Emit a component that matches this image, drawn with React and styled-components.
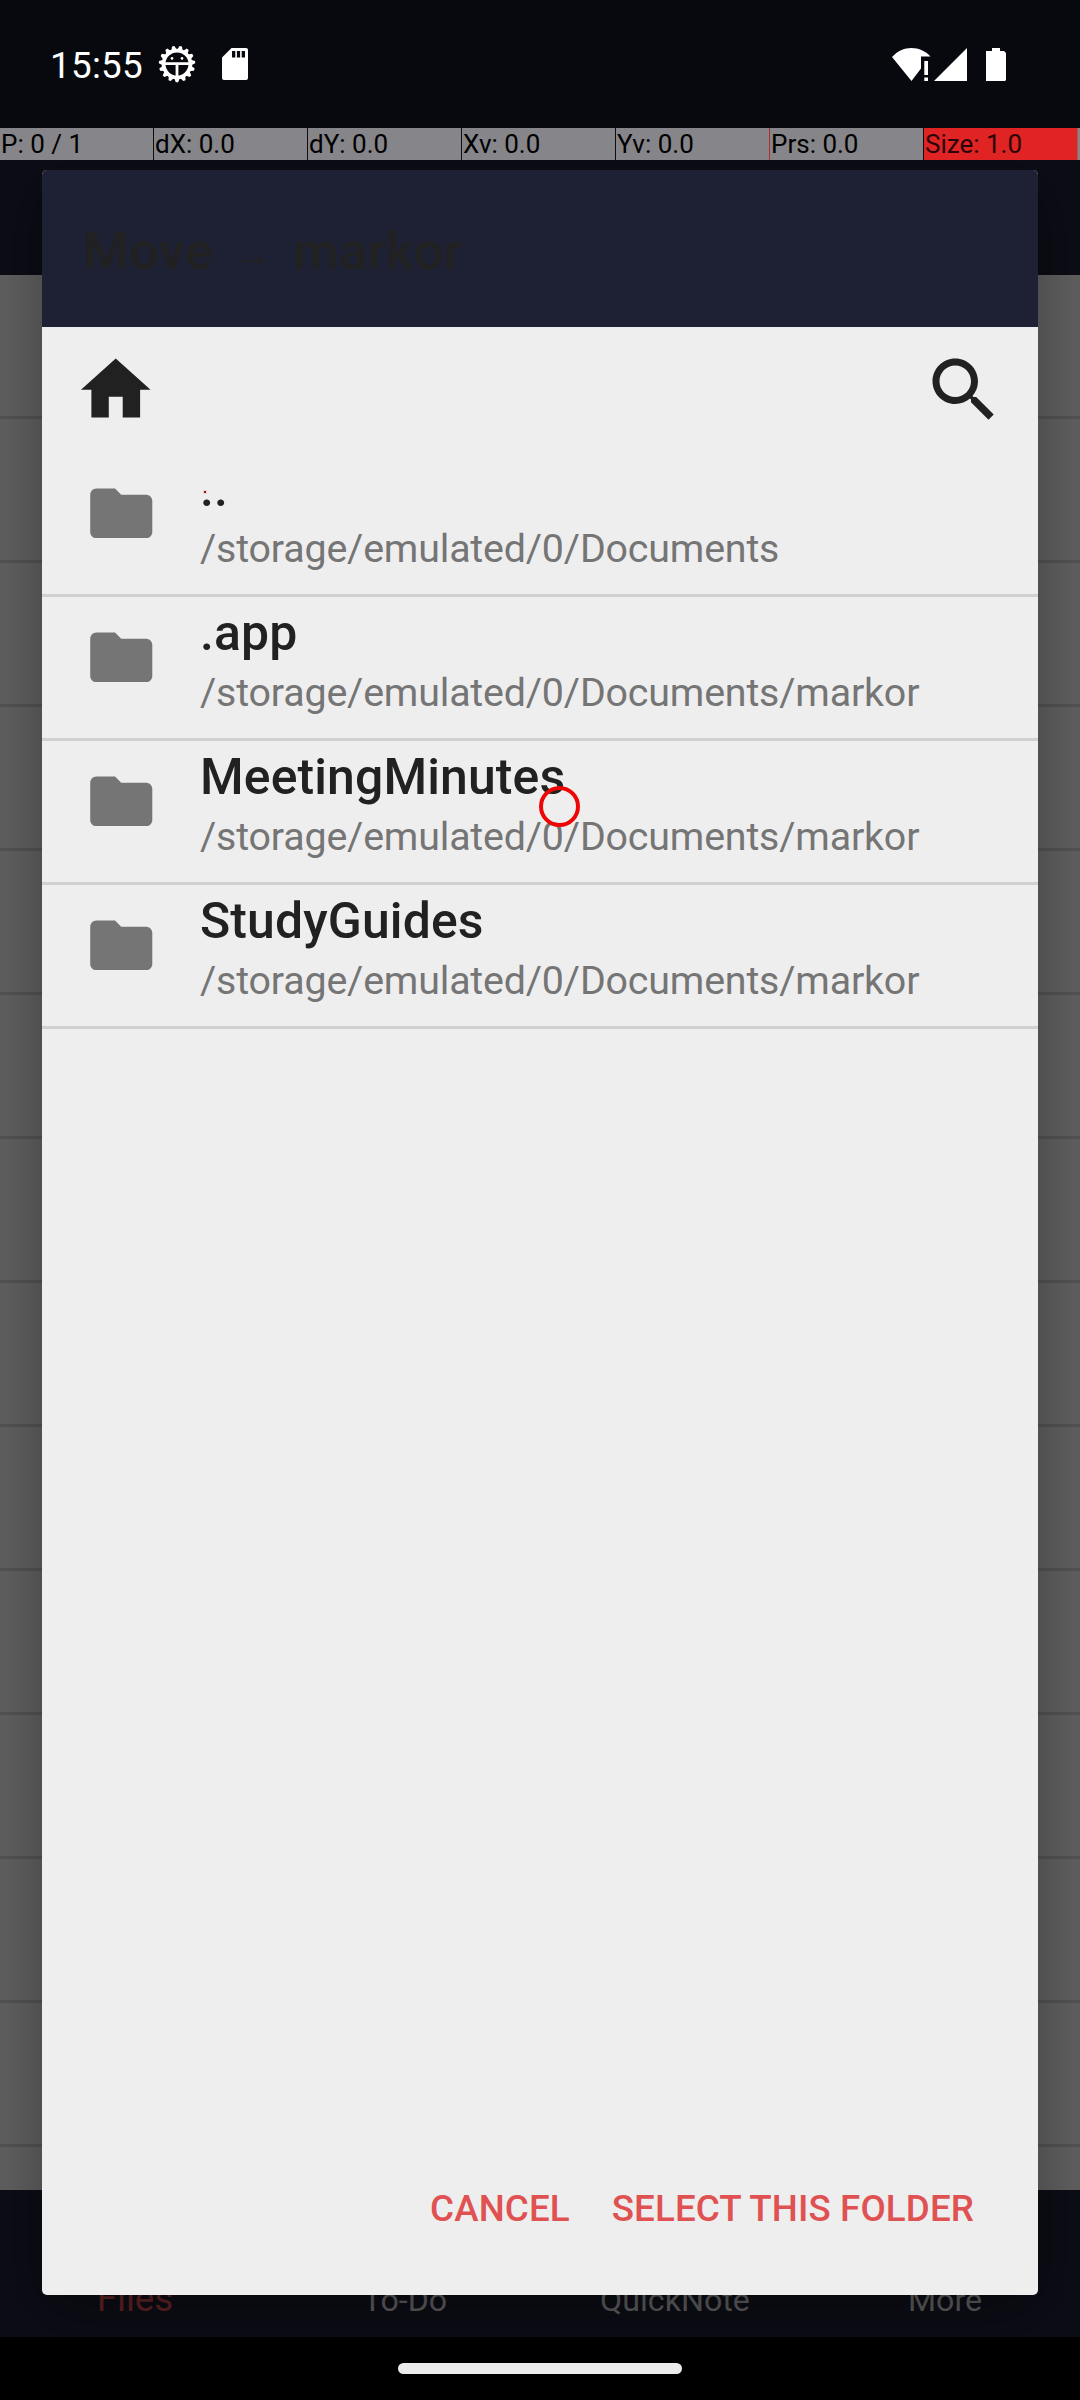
import React from "react";
import styled, { createGlobalStyle } from "styled-components";

const GlobalStyle = createGlobalStyle`
  * { box-sizing: border-box; }
  html, body { margin: 0; padding: 0; background: #000; }
  body { font-family: Roboto, "Liberation Sans", sans-serif; }
`;

const Screen = styled.div`
  position: relative;
  display: flex;
  flex-direction: column;
  width: 1080px;
  height: 2400px;
  overflow: hidden;
  background: #5f5f5f;
`;

const StatusBar = styled.header`
  flex: none;
  display: flex;
  align-items: center;
  justify-content: space-between;
  height: 128px;
  padding: 0 74px 0 50px;
  background: #08090e;
  color: #fff;
`;

const StatusGroup = styled.div`
  display: flex;
  align-items: center;
  height: 44px;
`;

const Clock = styled.span`
  width: 108px;
  font-size: 36.75px;
  line-height: 44px;
  letter-spacing: 0.3px;
  padding-top: 4px;
`;

const Glyph = styled.svg`
  display: block;
  flex: none;
  width: ${(p) => p.$w}px;
  height: ${(p) => p.$h}px;
  margin-left: ${(p) => p.$ml || 0}px;
  fill: ${(p) => p.$color || "#fff"};
  overflow: visible;
`;

const PointerBar = styled.div`
  flex: none;
  display: grid;
  grid-template-columns: repeat(7, 153px) 1fr;
  column-gap: 1px;
  height: 32px;
  background: linear-gradient(90deg, #0d0e14 0 769px, #b02a2e 769px 770px, #0d0e14 770px 1077px, #b0555a 1077px);
`;

const PointerCell = styled.div`
  padding-left: 1px;
  background: ${(p) => (p.$hot ? "#e02424" : "#868589")};
  color: ${(p) => (p.$hot ? "#2a0508" : "#000")};
  font-size: 26px;
  line-height: 33px;
  white-space: nowrap;
`;

const AppBar = styled.div`
  flex: none;
  height: 115px;
  background: #0c0d15;
`;

const BackgroundList = styled.div`
  flex: none;
  height: 1915px;
  overflow: hidden;
`;

const BackgroundRow = styled.div`
  height: 144px;
  border-bottom: 3px solid #525252;
`;

const BottomNav = styled.nav`
  flex: none;
  display: grid;
  grid-template-columns: repeat(4, 1fr);
  align-items: end;
  height: 147px;
  padding-bottom: 17px;
  background: #0c0d15;
`;

const NavItem = styled.span`
  padding-bottom: ${(p) => (p.$active ? 1 : 0)}px;
  text-align: center;
  font-size: ${(p) => (p.$active ? 36.75 : 32.2)}px;
  line-height: 40px;
  color: ${(p) => (p.$active ? "#5e2021" : "#5a5a5a")};
`;

const GestureBar = styled.div`
  flex: none;
  display: flex;
  justify-content: center;
  height: 63px;
  padding-top: 26px;
  background: #000;
`;

const GestureHandle = styled.div`
  width: 284px;
  height: 11px;
  border-radius: 6px;
  background: #ececec;
`;

const DialogLayer = styled.div`
  position: absolute;
  left: 0;
  right: 0;
  top: 160px;
  height: 2177px;
  padding: 10px 42px 42px;
  overflow: hidden;
`;

const Dialog = styled.section`
  display: flex;
  flex-direction: column;
  height: 2125px;
  border-radius: 5px;
  overflow: hidden;
  background: #eee;
  box-shadow: 0 16px 60px rgba(0, 0, 0, 0.32);
`;

const DialogHeader = styled.h1`
  flex: none;
  display: flex;
  align-items: center;
  height: 157px;
  margin: 0;
  padding: 4px 0 0 41px;
  background: #1e2033;
  color: #212121;
  font-size: 52.5px;
  font-weight: 500;
  line-height: 62px;
  letter-spacing: 0.2px;
`;

const TitleArrow = styled.span`
  display: flex;
  width: 80px;
  justify-content: center;
  padding-top: 6px;
  font-size: 40px;
  font-weight: 400;
  font-family: "Liberation Sans", sans-serif;
`;

const Tools = styled.div`
  flex: none;
  display: flex;
  justify-content: space-between;
  height: 126px;
  padding: 21px 32px 0 32px;
`;

const FolderRow = styled.div`
  flex: none;
  display: flex;
  height: 144px;
  border-bottom: 3px solid #d0d0d0;
`;

const FolderIconBox = styled.div`
  width: 158px;
  padding: 23px 0 0 42px;
`;

const FolderText = styled.div`
  display: flex;
  flex-direction: column;
  white-space: nowrap;
`;

const FolderName = styled.span`
  height: 68px;
  padding-top: 6px;
  color: #212121;
  font-size: 49.9px;
  font-weight: 500;
  line-height: 60px;
  letter-spacing: 0.14px;
`;

const FolderPath = styled.span`
  color: #757575;
  font-size: 39.375px;
  line-height: 56px;
  letter-spacing: -0.17px;
`;

const Actions = styled.footer`
  display: flex;
  justify-content: flex-end;
  gap: 42px;
  margin-top: auto;
  padding: 0 64px 64px 0;
`;

const Action = styled.button`
  padding: 0;
  border: 0;
  background: none;
  color: #e05252;
  font: 500 36.75px/44px Roboto, "Liberation Sans", sans-serif;
  letter-spacing: 0.1px;
`;

const TouchRing = styled.div`
  position: absolute;
  left: 539px;
  top: 786px;
  width: 41px;
  height: 41px;
  border: 4px solid #ee0505;
  border-radius: 50%;
`;

const TouchDot = styled.div`
  position: absolute;
  left: 204px;
  top: 491px;
  width: 2px;
  height: 2px;
  background: #8c2020;
  box-shadow: 0 0 0 1px #f8cccc;
`;

const DebugBug = () => (
  <Glyph $w={38} $h={38} viewBox="-19 -19 38 38">
    <circle r="13.4" fill="none" stroke="#fff" strokeWidth="3.8" />
    {Array.from({ length: 15 }, (_, i) => (
      <path key={i} d="M-2.8 -14L-1.2 -18.2H1.2L2.8 -14Z" transform={`rotate(${i * 24 + 12})`} />
    ))}
    <path d="M-13 -1.8H13V1H1.4V13H-1.4V1H-13Z" />
    <circle cx="-5" cy="-5.6" r="1.3" />
    <circle cx="5" cy="-5.6" r="1.3" />
  </Glyph>
);

const SdCard = () => (
  <Glyph $w={26} $h={32} $ml={26} viewBox="0 0 26 32">
    <path
      fillRule="evenodd"
      d="M9.5 0H24a2 2 0 0 1 2 2V30a2 2 0 0 1-2 2H2a2 2 0 0 1-2-2V9.500ZM10 3v6.500h3.300V3ZM14.900 3v6.500h3.200V3ZM19.700 3v6.500h3.300V3Z"
    />
  </Glyph>
);

const Wifi = () => (
  <Glyph $w={39} $h={33} viewBox="0 0 39 33">
    <path d="M0 9C5.500 3 12 0 19.500 0S33.500 3 38.500 8.500H29V20.500L19.500 33Z" />
    <path d="M32.300 13H36V27H32.300ZM32.300 29.500H36V33H32.300Z" />
  </Glyph>
);

const Signal = () => (
  <Glyph $w={33} $h={33} $ml={3} viewBox="0 0 33 33">
    <path d="M0 33L33 0V33Z" />
  </Glyph>
);

const Battery = () => (
  <Glyph $w={20} $h={33} $ml={19} viewBox="0 0 20 33">
    <path d="M6 0H14V3H18L20 5V32L19 33H0V3H6Z" />
  </Glyph>
);

const Icon = ({ size, color, d }) => (
  <Glyph $w={size} $h={size} $color={color} viewBox="0 0 24 24">
    <path d={d} />
  </Glyph>
);

const HOME = "M10 20v-6h4v6h5v-8h3L12 3 2 12h3v8z";
const SEARCH =
  "M15.5 14h-.79l-.28-.27C15.41 12.59 16 11.11 16 9.5 16 5.91 13.09 3 9.5 3S3 5.91 3 9.5 5.91 16 9.5 16c1.61 0 3.09-.59 4.23-1.57l.27.28v.79l5 4.99L20.49 19l-4.99-5zm-6 0C7.01 14 5 11.99 5 9.5S7.01 5 9.5 5 14 7.01 14 9.5 11.99 14 9.5 14z";
const FOLDER =
  "M10 4H4c-1.1 0-1.99.9-1.99 2L2 18c0 1.1.9 2 2 2h16c1.1 0 2-.9 2-2V8c0-1.1-.9-2-2-2h-8l-2-2z";

const pointerCells = ["P: 0 / 1", "dX: 0.0", "dY: 0.0", "Xv: 0.0", "Yv: 0.0", "Prs: 0.0", "Size: 1.0"];
const ROOT = "/storage/emulated/0/Documents";
const folders = [
  { name: "..", path: ROOT },
  { name: ".app", path: `${ROOT}/markor` },
  { name: "MeetingMinutes", path: `${ROOT}/markor` },
  { name: "StudyGuides", path: `${ROOT}/markor` },
];
const tabs = ["Files", "To-Do", "QuickNote", "More"];

export default function App() {
  return (
    <>
      <GlobalStyle />
      <Screen>
        <StatusBar>
          <StatusGroup>
            <Clock>15:55</Clock>
            <DebugBug />
            <SdCard />
          </StatusGroup>
          <StatusGroup>
            <Wifi />
            <Signal />
            <Battery />
          </StatusGroup>
        </StatusBar>
        <PointerBar>
          {pointerCells.map((text) => (
            <PointerCell key={text} $hot={text.startsWith("Size")}>
              {text}
            </PointerCell>
          ))}
          <PointerCell />
        </PointerBar>
        <AppBar />
        <BackgroundList>
          {Array.from({ length: 14 }, (_, i) => (
            <BackgroundRow key={i} />
          ))}
        </BackgroundList>
        <BottomNav>
          {tabs.map((tab) => (
            <NavItem key={tab} $active={tab === "Files"}>
              {tab}
            </NavItem>
          ))}
        </BottomNav>
        <GestureBar>
          <GestureHandle />
        </GestureBar>

        <DialogLayer>
          <Dialog>
            <DialogHeader>
              <span>Move</span>
              <TitleArrow>→</TitleArrow>
              <span>markor</span>
            </DialogHeader>
            <Tools>
              <Icon size={83.5} color="#212121" d={HOME} />
              <Icon size={84} color="#212121" d={SEARCH} />
            </Tools>
            {folders.map((f) => (
              <FolderRow key={f.name}>
                <FolderIconBox>
                  <Icon size={74.5} color="#757575" d={FOLDER} />
                </FolderIconBox>
                <FolderText>
                  <FolderName>{f.name}</FolderName>
                  <FolderPath>{f.path}</FolderPath>
                </FolderText>
              </FolderRow>
            ))}
            <Actions>
              <Action>CANCEL</Action>
              <Action>SELECT THIS FOLDER</Action>
            </Actions>
          </Dialog>
        </DialogLayer>
        <TouchRing />
        <TouchDot />
      </Screen>
    </>
  );
}
